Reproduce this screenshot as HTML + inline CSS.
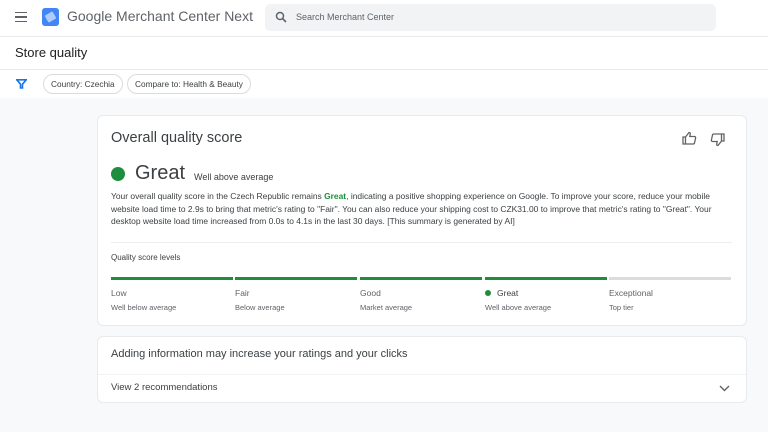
<!DOCTYPE html>
<html><head><style>
*{box-sizing:border-box;margin:0;padding:0}
body{width:768px;height:432px;overflow:hidden;font-family:"Liberation Sans",sans-serif;background:#fff;color:#3c4043;position:relative}
.abs{position:absolute}
.main{position:absolute;left:0;top:98px;width:768px;height:334px;background:#f8f9fa}
.card{position:absolute;background:#fff;border:1px solid #e8eaed;border-radius:6px}
.chip{position:absolute;top:74px;height:20px;border:1px solid #dadce0;border-radius:10px;font-size:8.3px;line-height:18px;padding:0 7px;color:#3c4043}
.bar{position:absolute;top:277px;height:3px;width:122px;background:#1e8e3e}
.lv{position:absolute;top:288px;font-size:8.5px;color:#5f6368}
.sub{position:absolute;top:303px;font-size:7.5px;color:#5f6368}
</style></head><body>
<div class="abs" style="left:15px;top:12px;width:12px;height:10px;border-top:1.6px solid #5f6368;border-bottom:1.6px solid #5f6368"></div>
<div class="abs" style="left:15px;top:16.2px;width:12px;height:1.6px;background:#5f6368"></div>
<div class="abs" style="left:42px;top:8px;width:17px;height:18px;background:#4285f4;border-radius:3px"></div>
<div class="abs" style="left:46px;top:13px;width:9px;height:8px;background:#aecbfa;transform:rotate(-30deg);border-radius:1px"></div>
<div class="abs" style="left:67px;top:8px;font-size:14px;color:#5f6368">Google Merchant Center Next</div>
<div class="abs" style="left:265px;top:4px;width:451px;height:27px;background:#f1f3f4;border-radius:5px"></div>
<svg class="abs" style="left:275px;top:11px" width="12" height="12" viewBox="0 0 12 12"><circle cx="5" cy="5" r="3.5" fill="none" stroke="#5f6368" stroke-width="1.5"/><path d="M7.5 7.5L11 11" stroke="#5f6368" stroke-width="1.6"/></svg>
<div class="abs" style="left:296px;top:12px;font-size:9px;color:#5f6368">Search Merchant Center</div>
<div class="abs" style="left:0;top:36px;width:768px;height:1px;background:#e8eaed"></div>
<div class="abs" style="left:15px;top:45px;font-size:13px;color:#202124">Store quality</div>
<div class="abs" style="left:0;top:69px;width:768px;height:1px;background:#e8eaed"></div>
<svg class="abs" style="left:16px;top:79px" width="11" height="10" viewBox="0 0 11 10"><path d="M0.8 0.8H10.2L6.5 5.2V9H4.5V5.2Z" fill="none" stroke="#1a73e8" stroke-width="1.6"/></svg>
<div class="chip" style="left:43px">Country: Czechia</div>
<div class="chip" style="left:127px">Compare to: Health &amp; Beauty</div>
<div class="main"></div>
<div class="card" style="left:97px;top:115px;width:650px;height:211px"></div>
<div class="abs" style="left:111px;top:130px;font-size:14.5px;color:#3c4043">Overall quality score</div>
<svg class="abs" style="left:682px;top:131px" width="15" height="14" viewBox="0 0 15 14"><path d="M1 6H3.5V13H1ZM3.5 6L7 1.5C8 1.5 8.5 2.2 8.3 3L7.8 5.5H12.5C13.3 5.5 13.8 6.2 13.6 7L12.5 12C12.3 12.6 11.8 13 11.2 13H3.5" fill="none" stroke="#5f6368" stroke-width="1.3"/></svg>
<svg class="abs" style="left:710px;top:133px" width="15" height="14" viewBox="0 0 15 14"><g transform="rotate(180 7.5 7)"><path d="M1 6H3.5V13H1ZM3.5 6L7 1.5C8 1.5 8.5 2.2 8.3 3L7.8 5.5H12.5C13.3 5.5 13.8 6.2 13.6 7L12.5 12C12.3 12.6 11.8 13 11.2 13H3.5" fill="none" stroke="#5f6368" stroke-width="1.3"/></g></svg>
<div class="abs" style="left:111px;top:167px;width:14px;height:14px;border-radius:50%;background:#1e8e3e"></div>
<div class="abs" style="left:135px;top:162px;font-size:20px;color:#3c4043">Great</div>
<div class="abs" style="left:194px;top:172px;font-size:9px;color:#3c4043">Well above average</div>
<div class="abs" style="left:111px;top:190px;width:626px;font-size:8.45px;line-height:12.5px;color:#3c4043">Your overall quality score in the Czech Republic remains <b style="color:#1e8e3e">Great</b>, indicating a positive shopping experience on Google. To improve your score, reduce your mobile website load time to 2.9s to bring that metric's rating to "Fair". You can also reduce your shipping cost to CZK31.00 to improve that metric's rating to "Great". Your desktop website load time increased from 0.0s to 4.1s in the last 30 days. [This summary is generated by AI]</div>
<div class="abs" style="left:111px;top:242px;width:621px;height:1px;background:#eceff1"></div>
<div class="abs" style="left:111px;top:253px;font-size:8px;color:#3c4043">Quality score levels</div>
<div class="bar" style="left:111px"></div>
<div class="bar" style="left:235px"></div>
<div class="bar" style="left:360px"></div>
<div class="bar" style="left:485px"></div>
<div class="bar" style="left:609px;background:#dadce0"></div>
<div class="lv" style="left:111px">Low</div><div class="sub" style="left:111px">Well below average</div>
<div class="lv" style="left:235px">Fair</div><div class="sub" style="left:235px">Below average</div>
<div class="lv" style="left:360px">Good</div><div class="sub" style="left:360px">Market average</div>
<div class="abs" style="left:485px;top:290px;width:6px;height:6px;border-radius:50%;background:#1e8e3e"></div>
<div class="lv" style="left:497px;color:#3c4043">Great</div><div class="sub" style="left:485px">Well above average</div>
<div class="lv" style="left:609px">Exceptional</div><div class="sub" style="left:609px">Top tier</div>
<div class="card" style="left:97px;top:336px;width:650px;height:67px"></div>
<div class="abs" style="left:111px;top:348px;font-size:11px;color:#3c4043">Adding information may increase your ratings and your clicks</div>
<div class="abs" style="left:98px;top:374px;width:648px;height:1px;background:#f1f3f4"></div>
<div class="abs" style="left:111px;top:382px;font-size:9.5px;color:#3c4043">View 2 recommendations</div>
<svg class="abs" style="left:719px;top:385px" width="11" height="7" viewBox="0 0 11 7"><path d="M1 1L5.5 5.5L10 1" fill="none" stroke="#5f6368" stroke-width="1.4"/></svg>
</body></html>
